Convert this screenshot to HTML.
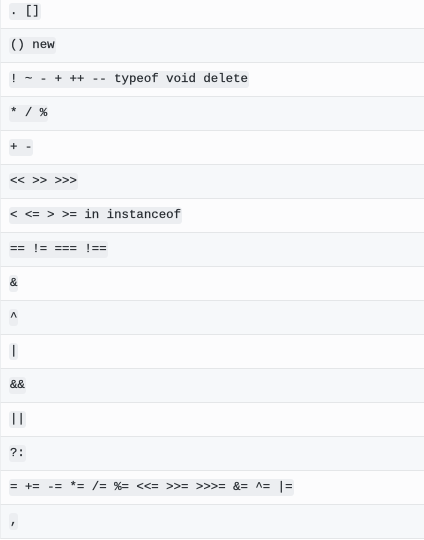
<!DOCTYPE html>
<html><head><style>
body{margin:0;background:#fff;width:424px;height:540px;overflow:hidden;font-family:"Liberation Mono",monospace}
.t{position:absolute;top:-5px;left:0;width:424px}
.r{height:33px;border-bottom:1px solid #e4e6e8;border-left:1px solid #eceef0;display:flex;align-items:center;padding-left:8px;background:#fcfcfd}
.r:nth-child(even){background:#f6f8fa}
code{font-family:"Liberation Mono",monospace;font-size:12.4px;color:#24292e;background:#eceef1;padding:2px 1px;border-radius:3px;white-space:pre;line-height:13px;-webkit-text-stroke:0.2px #24292e}
</style></head><body><div class="t">
<div class="r"><code>. []</code></div>
<div class="r"><code>() new</code></div>
<div class="r"><code>! ~ - + ++ -- typeof void delete</code></div>
<div class="r"><code>* / %</code></div>
<div class="r"><code>+ -</code></div>
<div class="r"><code>&lt;&lt; &gt;&gt; &gt;&gt;&gt;</code></div>
<div class="r"><code>&lt; &lt;= &gt; &gt;= in instanceof</code></div>
<div class="r"><code>== != === !==</code></div>
<div class="r"><code>&amp;</code></div>
<div class="r"><code>^</code></div>
<div class="r"><code>|</code></div>
<div class="r"><code>&amp;&amp;</code></div>
<div class="r"><code>||</code></div>
<div class="r"><code>?:</code></div>
<div class="r"><code>= += -= *= /= %= &lt;&lt;= &gt;&gt;= &gt;&gt;&gt;= &amp;= ^= |=</code></div>
<div class="r"><code>,</code></div>
</div></body></html>
